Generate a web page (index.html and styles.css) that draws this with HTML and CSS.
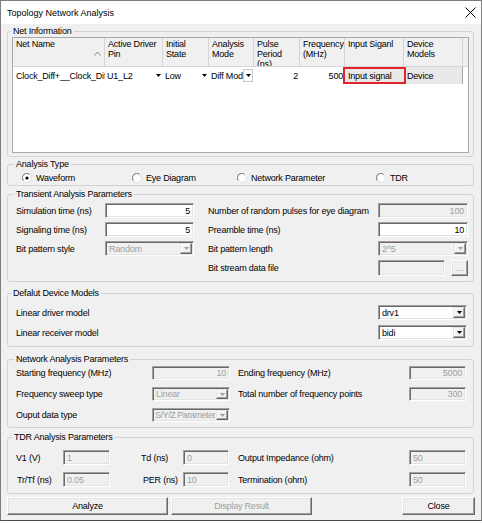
FILE: index.html
```html
<!DOCTYPE html>
<html lang="en">
<head>
<meta charset="utf-8">
<title>Topology Network Analysis</title>
<link rel="stylesheet" href="styles.css">
</head>
<body>
<div class="window">
  <div class="titlebar">
    <span class="title">Topology Network Analysis</span>
    <svg class="close" width="11" height="11" viewBox="0 0 11 11"><path d="M0.5 0.5 L10.5 10.5 M10.5 0.5 L0.5 10.5" stroke="#000" stroke-width="1" fill="none"/></svg>
  </div>
  <div class="body">
    <div class="group g-net">
      <div class="group-title t3">Net Information</div>
      <div class="listview">
        <div class="lv-head">
          <div class="hc w1 hc-sort"><span class="hc-text">Net Name</span><svg class="sort" width="7" height="5" viewBox="0 0 7 5"><path d="M0.5 4.5 L3.5 1 L6.5 4.5" fill="none" stroke="#8a8a8a" stroke-width="1"/></svg></div>
          <div class="hc w2">Active Driver Pin</div>
          <div class="hc w3">Initial State</div>
          <div class="hc w4">Analysis Mode</div>
          <div class="hc w5">Pulse Period (ns)</div>
          <div class="hc w6">Frequency (MHz)</div>
          <div class="hc w7">Input Siganl</div>
          <div class="hc w8">Device Models</div>
          <div class="hc wf"></div>
        </div>
        <div class="lv-row">
          <div class="rc w1"><span class="clip">Clock_Diff+__Clock_Diff-</span></div>
          <div class="rc w2 rc-combo"><span class="cc-text">U1_L2</span><span class="cc-btn"><svg width="5" height="3" viewBox="0 0 5 3"><path d="M0 0 H5 L2.5 3 Z" fill="#000"/></svg></span></div>
          <div class="rc w3 rc-combo"><span class="cc-text">Low</span><span class="cc-btn"><svg width="5" height="3" viewBox="0 0 5 3"><path d="M0 0 H5 L2.5 3 Z" fill="#000"/></svg></span></div>
          <div class="rc w4 rc-combo"><span class="cc-text">Diff Mode</span><span class="cc-btn cc-box"><svg width="5" height="3" viewBox="0 0 5 3"><path d="M0 0 H5 L2.5 3 Z" fill="#000"/></svg></span></div>
          <div class="rc w5 num">2</div>
          <div class="rc w6 num">500</div>
          <div class="rc sig">Input signal</div>
          <div class="rc dev">Device</div>
          <div class="rc wf"></div>
        </div>
      </div>
    </div>

    <div class="group g-type">
      <div class="group-title t6">Analysis Type</div>
      <div class="radios">
        <div class="radio"><svg width="10" height="10" viewBox="0 0 10 10"><circle cx="5" cy="5" r="4.5" fill="#fff"/><path d="M1.4 7.6 A4.4 4.4 0 0 1 7.6 1.4" fill="none" stroke="#6e6e6e"/><path d="M8.6 2.4 A4.4 4.4 0 0 1 2.4 8.6" fill="none" stroke="#dcdcdc"/><circle cx="5" cy="5" r="1.6" fill="#000"/></svg><span>Waveform</span></div>
        <div class="radio"><svg width="10" height="10" viewBox="0 0 10 10"><circle cx="5" cy="5" r="4.5" fill="#fff"/><path d="M1.4 7.6 A4.4 4.4 0 0 1 7.6 1.4" fill="none" stroke="#6e6e6e"/><path d="M8.6 2.4 A4.4 4.4 0 0 1 2.4 8.6" fill="none" stroke="#dcdcdc"/></svg><span>Eye Diagram</span></div>
        <div class="radio"><svg width="10" height="10" viewBox="0 0 10 10"><circle cx="5" cy="5" r="4.5" fill="#fff"/><path d="M1.4 7.6 A4.4 4.4 0 0 1 7.6 1.4" fill="none" stroke="#6e6e6e"/><path d="M8.6 2.4 A4.4 4.4 0 0 1 2.4 8.6" fill="none" stroke="#dcdcdc"/></svg><span>Network Parameter</span></div>
        <div class="radio"><svg width="10" height="10" viewBox="0 0 10 10"><circle cx="5" cy="5" r="4.5" fill="#fff"/><path d="M1.4 7.6 A4.4 4.4 0 0 1 7.6 1.4" fill="none" stroke="#6e6e6e"/><path d="M8.6 2.4 A4.4 4.4 0 0 1 2.4 8.6" fill="none" stroke="#dcdcdc"/></svg><span>TDR</span></div>
      </div>
    </div>

    <div class="group g-trans">
      <div class="group-title t6">Transient Analysis Parameters</div>
      <div class="grid trans-grid">
        <div class="lab">Simulation time (ns)</div>
        <div class="field num">5</div>
        <div class="lab lab-r">Number of random pulses for eye diagram</div>
        <div class="field num dis">100</div>

        <div class="lab">Signaling time (ns)</div>
        <div class="field num">5</div>
        <div class="lab lab-r">Preamble time (ns)</div>
        <div class="field num">10</div>

        <div class="lab">Bit pattern style</div>
        <div class="combo dis"><span class="combo-text">Random</span><span class="combo-btn"><svg width="5" height="3" viewBox="0 0 5 3"><path d="M0 0 H5 L2.5 3 Z" fill="#a0a0a0"/></svg></span></div>
        <div class="lab lab-r">Bit pattern length</div>
        <div class="combo dis"><span class="combo-text">2^5</span><span class="combo-btn"><svg width="5" height="3" viewBox="0 0 5 3"><path d="M0 0 H5 L2.5 3 Z" fill="#a0a0a0"/></svg></span></div>

        <div class="lab lab-r col3">Bit stream data file</div>
        <div class="file-row">
          <div class="field dis file-input"></div>
          <div class="btn small-btn dis-text">...</div>
        </div>
      </div>
    </div>

    <div class="group g-dev">
      <div class="group-title t3">Defalut Device Models</div>
      <div class="grid dev-grid">
        <div class="lab">Linear driver model</div>
        <div class="combo"><span class="combo-text">drv1</span><span class="combo-btn"><svg width="5" height="3" viewBox="0 0 5 3"><path d="M0 0 H5 L2.5 3 Z" fill="#000"/></svg></span></div>
        <div class="lab">Linear receiver model</div>
        <div class="combo"><span class="combo-text">bidi</span><span class="combo-btn"><svg width="5" height="3" viewBox="0 0 5 3"><path d="M0 0 H5 L2.5 3 Z" fill="#000"/></svg></span></div>
      </div>
    </div>

    <div class="group g-netw">
      <div class="group-title t6">Network Analysis Parameters</div>
      <div class="grid netw-grid">
        <div class="lab">Starting frequency (MHz)</div>
        <div class="field num dis">10</div>
        <div class="lab lab-r8">Ending frequency (MHz)</div>
        <div class="field num dis">5000</div>

        <div class="lab">Frequency sweep type</div>
        <div class="combo dis"><span class="combo-text">Linear</span><span class="combo-btn"><svg width="5" height="3" viewBox="0 0 5 3"><path d="M0 0 H5 L2.5 3 Z" fill="#a0a0a0"/></svg></span></div>
        <div class="lab lab-r8">Total number of frequency points</div>
        <div class="field num dis">300</div>

        <div class="lab">Ouput data type</div>
        <div class="combo dis"><span class="combo-text tight">S/Y/Z Parameter</span><span class="combo-btn"><svg width="5" height="3" viewBox="0 0 5 3"><path d="M0 0 H5 L2.5 3 Z" fill="#a0a0a0"/></svg></span></div>
      </div>
    </div>

    <div class="group g-tdr">
      <div class="group-title t4">TDR Analysis Parameters</div>
      <div class="grid tdr-grid">
        <div class="lab">V1 (V)</div>
        <div class="field dis">1</div>
        <div class="lab lab-td">Td (ns)</div>
        <div class="field dis">0</div>
        <div class="lab lab-r9">Output Impedance (ohm)</div>
        <div class="field dis">50</div>

        <div class="lab lab-trtf">Tr/Tf (ns)</div>
        <div class="field dis">0.05</div>
        <div class="lab lab-per">PER (ns)</div>
        <div class="field dis">10</div>
        <div class="lab lab-r9">Termination (ohm)</div>
        <div class="field dis">50</div>
      </div>
    </div>

    <div class="buttons">
      <div class="btn b-analyze">Analyze</div>
      <div class="btn b-display dis-text">Display Result</div>
      <div class="btn b-close">Close</div>
    </div>
  </div>
</div>
</body>
</html>
```

FILE: styles.css
```css
* { box-sizing: border-box; }

html, body {
  margin: 0;
  padding: 0;
  background: #ffffff;
}

body {
  width: 482px;
  height: 523px;
  overflow: hidden;
  font-family: "Liberation Sans", Arial, sans-serif;
  font-size: 9px;
  letter-spacing: -0.2px;
  color: #000;
}

.window {
  width: 482px;
  height: 521px;
  border: 1px solid #7f7f7f;
  border-bottom-color: #4a4a4a;
  background: #f0f0f0;
  display: flex;
  flex-direction: column;
}

.titlebar {
  flex: none;
  height: 23px;
  background: #fff;
  display: flex;
  align-items: center;
  justify-content: space-between;
  padding: 0 5px 0 6px;
}

.title {
  font-size: 9px;
  letter-spacing: 0;
  color: #000;
}

.body {
  flex: 1;
  display: flex;
  flex-direction: column;
  padding: 0 7px 0 6px;
}

/* group boxes */
.group {
  flex: none;
  border: 1px solid #d3d3d3;
  border-radius: 3px;
}

.group-title {
  margin-top: -6px;
  height: 10px;
  line-height: 10px;
  padding: 0 2px;
  width: max-content;
  background: #f0f0f0;
}
.t3 { margin-left: 3px; }
.t4 { margin-left: 4px; }
.t6 { margin-left: 6px; }

.g-net   { margin-top: 7px;  height: 126px; }
.g-type  { margin-top: 7px;  height: 22px; }
.g-trans { margin-top: 8px;  height: 88px; }
.g-dev   { margin-top: 11px; height: 54px; }
.g-netw  { margin-top: 12px; height: 69px; }
.g-tdr   { margin-top: 9px;  height: 57px; }

/* list view */
.listview {
  margin: 1px 4px 0 4px;
  height: 116px;
  border: 1px solid #a8a8a8;
  background: #fff;
  overflow: hidden;
}

.lv-head {
  display: flex;
  height: 29px;
  background: #f0f0f0;
  border-bottom: 1px solid #d5d5d5;
}

.hc {
  flex: none;
  height: 100%;
  padding: 1px 3px 0 3px;
  line-height: 10px;
  overflow: hidden;
  border-right: 1px solid #d5d5d5;
}

.hc-sort {
  display: flex;
  align-items: flex-start;
}
.hc-text { flex: 1; }
.sort { margin-top: 12px; margin-right: 0; }

.w1 { width: 92px; }
.w2 { width: 58px; }
.w3 { width: 46px; }
.w4 { width: 45px; }
.w5 { width: 46px; }
.w6 { width: 45px; }
.w7 { width: 59px; }
.w8 { width: 59px; }
.wf { flex: 1; border-right: none; }

.lv-row {
  display: flex;
  height: 17px;
}

.rc {
  flex: none;
  height: 17px;
  padding: 0 3px;
  display: flex;
  align-items: center;
  white-space: nowrap;
  overflow: hidden;
}
.rc.num { justify-content: flex-end; padding-right: 2px; }
.rc.w1 { padding-right: 0; }
.clip { display: block; overflow: hidden; white-space: nowrap; width: 100%; }

.rc-combo { padding: 0 0 0 2px; }
.cc-text { flex: 1; overflow: hidden; white-space: nowrap; }
.cc-btn {
  flex: none;
  width: 10px;
  height: 13px;
  display: flex;
  align-items: center;
  justify-content: center;
}
.cc-box {
  background: #fff;
  border: 1px solid #c8c8c8;
  margin-right: 1px;
}

.sig {
  width: 63px;
  margin-left: -2px;
  border: 2px solid #e3242b;
  background: #e8e8e8;
  padding-left: 3px;
}

.dev {
  width: 57px;
  background: #e8e8e8;
  padding-left: 1px;
  border-right: 1px solid #a8a8a8;
}

/* radios */
.radios {
  margin-top: 3px;
  height: 12px;
  display: grid;
  grid-template-columns: 110px 105px 139px auto;
  padding-left: 14px;
}
.radio {
  display: flex;
  align-items: center;
  gap: 4px;
}
.radio svg { flex: none; }

/* generic grids */
.grid {
  display: grid;
  align-items: center;
}
.lab {
  white-space: nowrap;
  overflow: hidden;
}

.trans-grid {
  margin-top: 4px;
  padding-left: 8px;
  grid-template-columns: 89px 89px 184px 90px;
  grid-template-rows: 15px 15px 15px 16px;
  row-gap: 4px;
}
.lab-r { padding-left: 14px; }
.col3 { grid-column: 3; }

.dev-grid {
  margin-top: 7px;
  padding: 0 6px 0 8px;
  grid-template-columns: 1fr 89px;
  grid-template-rows: 15px 15px;
  row-gap: 5px;
}

.netw-grid {
  margin-top: 2px;
  padding-left: 8px;
  grid-template-columns: 136px 78px 179px 57px;
  grid-template-rows: 14px 14px 14px;
  row-gap: 7px;
}
.lab-r8 { padding-left: 8px; }

.tdr-grid {
  margin-top: 8px;
  padding-left: 8px;
  grid-template-columns: 47px 47px 73px 46px 180px 57px;
  grid-template-rows: 15px 15px;
  row-gap: 7px;
}
.lab-td { padding-left: 31px; }
.lab-per { padding-left: 33px; }
.lab-trtf { padding-left: 1px; }
.lab-r9 { padding-left: 9px; }

/* fields */
.field {
  height: 100%;
  border: 1px solid;
  border-color: #a0a0a0 #ffffff #ffffff #a0a0a0;
  box-shadow: inset 1px 1px 0 #696969, inset -1px -1px 0 #e3e3e3;
  background: #fff;
  padding: 0 3px;
  display: flex;
  align-items: center;
  white-space: nowrap;
  overflow: hidden;
}
.field.num { justify-content: flex-end; padding-right: 3px; }
.field.dis, .combo.dis { background: #f0f0f0; color: #a0a0a0; }

.combo {
  height: 100%;
  border: 1px solid;
  border-color: #a0a0a0 #ffffff #ffffff #a0a0a0;
  box-shadow: inset 1px 1px 0 #696969, inset -1px -1px 0 #e3e3e3;
  background: #fff;
  display: flex;
  align-items: stretch;
  padding: 1px 1px 1px 1px;
}
.combo-text {
  flex: 1;
  padding-left: 2px;
  display: flex;
  align-items: center;
  white-space: nowrap;
  overflow: hidden;
}
.combo-text.tight { padding-left: 1px; letter-spacing: -0.45px; }
.combo-btn {
  flex: none;
  width: 12px;
  background: #f0f0f0;
  border: 1px solid;
  border-color: #e3e3e3 #696969 #696969 #e3e3e3;
  box-shadow: inset -1px -1px 0 #a0a0a0, inset 1px 1px 0 #ffffff;
  display: flex;
  align-items: center;
  justify-content: center;
}

.file-row {
  height: 100%;
  display: flex;
  gap: 6px;
}
.file-input { width: 67px; }
.small-btn { width: 17px; height: 100%; }

/* buttons */
.btn {
  display: flex;
  align-items: center;
  justify-content: center;
  background: #f0f0f0;
  border: 1px solid;
  border-color: #ffffff #696969 #696969 #ffffff;
  box-shadow: inset -1px -1px 0 #a0a0a0, inset 1px 1px 0 #e3e3e3;
  white-space: nowrap;
}
.dis-text { color: #a0a0a0; }

.buttons {
  margin-top: 3px;
  margin-right: -1px;
  height: 18px;
  display: flex;
  gap: 3px;
}
.b-analyze { width: 161px; }
.b-display { width: 141px; }
.b-close { width: 73px; margin-left: auto; }
```
